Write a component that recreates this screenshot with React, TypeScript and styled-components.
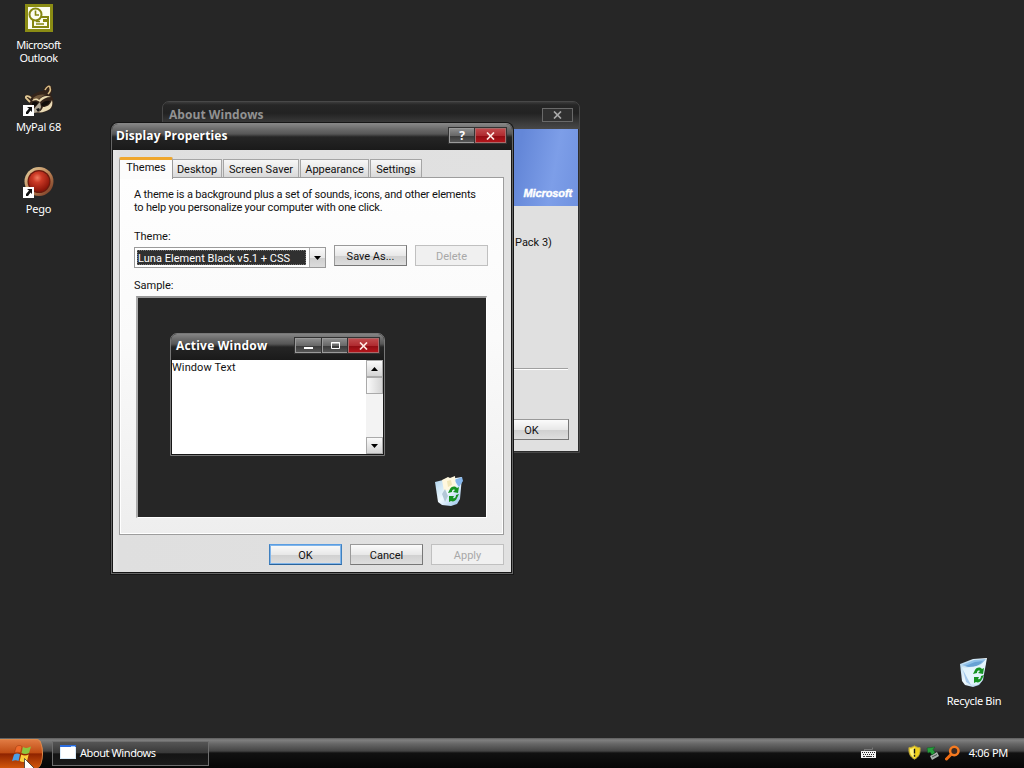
import React from 'react';
import styled, { createGlobalStyle, css } from 'styled-components';

const App = () => {
  return (
    <>
      <GlobalStyle />
      <Screen>
        <Desktop>
          <DesktopIcons>
            <DesktopItem>
              <OutlookIcon />
              <IconLabel>
                Microsoft
                <br />
                Outlook
              </IconLabel>
            </DesktopItem>
            <DesktopItem>
              <RaccoonIcon />
              <IconLabel $spacing="-0.2px">MyPal 68</IconLabel>
            </DesktopItem>
            <DesktopItem>
              <PegoIcon />
              <IconLabel $spacing="-0.2px">Pego</IconLabel>
            </DesktopItem>
          </DesktopIcons>

          <BinItem>
            <BinIcon width={30} height={32} />
            <IconLabel $spacing="-0.32px">Recycle Bin</IconLabel>
          </BinItem>

          <AboutWindow />
          <DisplayProperties />
        </Desktop>
        <Taskbar />
      </Screen>
    </>
  );
};

export default App;

const AboutWindow = () => (
  <AboutFrame>
    <AboutTitleBar>
      <AboutTitle>About Windows</AboutTitle>
      <InactiveClose>
        <CrossGlyph color="#a8a8a8" />
      </InactiveClose>
    </AboutTitleBar>
    <AboutBanner>
      <Brand>Microsoft</Brand>
    </AboutBanner>
    <AboutBody>
      <AboutText>Pack 3)</AboutText>
      <AboutRule />
      <AboutButton>OK</AboutButton>
    </AboutBody>
  </AboutFrame>
);

const tabs = [
  { name: 'Desktop', width: 50, spacing: '0' },
  { name: 'Screen Saver', width: 76, spacing: '0.05px' },
  { name: 'Appearance', width: 69, spacing: '0' },
  { name: 'Settings', width: 52, spacing: '-0.1px' },
];

const DisplayProperties = () => (
  <DialogFrame>
    <DialogTitleBar>
      <DialogTitle>Display Properties</DialogTitle>
      <CaptionButton $width={26}>?</CaptionButton>
      <CaptionButton $width={31} $red>
        <CrossGlyph color="#ffe9e4" />
      </CaptionButton>
    </DialogTitleBar>
    <DialogBody>
      <TabList>
        <ActiveTab>Themes</ActiveTab>
        {tabs.map(({ name, width, spacing }) => (
          <Tab key={name} $width={width} $spacing={spacing}>
            {name}
          </Tab>
        ))}
      </TabList>
      <TabPanel>
        <Description>
          <Line $spacing="-0.16px">
            A theme is a background plus a set of sounds, icons, and other elements
          </Line>
          <Line $spacing="-0.19px">to help you personalize your computer with one click.</Line>
        </Description>
        <FieldLabel>Theme:</FieldLabel>
        <ThemeRow>
          <ComboBox>
            <ComboValue>Luna Element Black v5.1 + CSS</ComboValue>
            <ComboArrow>
              <ArrowGlyph />
            </ComboArrow>
          </ComboBox>
          <Button>Save As...</Button>
          <Button $disabled>Delete</Button>
        </ThemeRow>
        <SampleLabel>Sample:</SampleLabel>
        <Sample>
          <SampleWindow />
          <SampleBin>
            <BinIcon width={30} height={32} papers />
          </SampleBin>
        </Sample>
      </TabPanel>
      <DialogActions>
        <Button $primary>OK</Button>
        <Button>Cancel</Button>
        <Button $disabled>Apply</Button>
      </DialogActions>
    </DialogBody>
  </DialogFrame>
);

const SampleWindow = () => (
  <SampleFrame>
    <SampleTitleBar>
      <SampleTitle>Active Window</SampleTitle>
      <CaptionButton $width={27}>
        <svg width="11" height="9" viewBox="0 0 11 9">
          <rect x="1" y="6" width="9" height="2" fill="#fff" />
        </svg>
      </CaptionButton>
      <CaptionButton $width={26}>
        <svg width="11" height="9" viewBox="0 0 11 9">
          <path d="M1.5 1.5h8v6h-8zM1 2h9" stroke="#fff" fill="none" />
        </svg>
      </CaptionButton>
      <CaptionButton $width={31} $red>
        <CrossGlyph color="#ffe9e4" />
      </CaptionButton>
    </SampleTitleBar>
    <SampleBody>
      <SampleText>Window Text</SampleText>
      <ScrollBar>
        <ScrollButton>
          <ArrowGlyph up />
        </ScrollButton>
        <ScrollThumb />
        <ScrollTrack />
        <ScrollButton>
          <ArrowGlyph />
        </ScrollButton>
      </ScrollBar>
    </SampleBody>
  </SampleFrame>
);

const Taskbar = () => (
  <Bar>
    <StartButton>
      <WindowsFlag />
    </StartButton>
    <TaskButton>
      <svg width="16" height="14" viewBox="0 0 16 14">
        <rect x="0" y="0" width="16" height="14" fill="#d9ecfb" />
        <rect x="0" y="0" width="16" height="2" fill="#2a6ce0" />
        <rect x="11" y="1" width="4" height="1" fill="#9ccaff" />
        <rect x="1" y="2" width="14" height="11" fill="#fff" />
      </svg>
      <TaskLabel>About Windows</TaskLabel>
    </TaskButton>
    <KeyboardIcon />
    <Tray>
      <ShieldIcon />
      <SafelyRemoveIcon />
      <SearchIcon />
      <Clock>4:06 PM</Clock>
    </Tray>
    <Cursor width="11" height="17" viewBox="0 0 11 17">
      <path
        d="M.5 .5V14l3-3 3 6 3-1-3-5.500h4z"
        fill="#fff"
        stroke="#222"
        strokeWidth=".7"
      />
    </Cursor>
  </Bar>
);

const CrossGlyph = ({ color }: { color: string }) => (
  <svg width="9" height="8" viewBox="0 0 9 8">
    <path d="M1 .5l7 7M8 .5l-7 7" stroke={color} strokeWidth="1.7" />
  </svg>
);

const ArrowGlyph = ({ up }: { up?: boolean }) => (
  <svg width="7" height="4" viewBox="0 0 7 4">
    <path d={up ? 'M0 4h7L3.500 0z' : 'M0 0h7L3.500 4z'} fill="#000" />
  </svg>
);

const Shortcut = () => (
  <g>
    <rect x="0" y="21" width="11" height="11" fill="#fff" />
    <path d="M4 23h5v5L7.500 26.500 5 30H3V28l3-3.500z" fill="#111" />
  </g>
);

const OutlookIcon = () => (
  <svg width="32" height="32" viewBox="0 0 32 32">
    <rect x="2" y="2" width="28" height="28" fill="#8b8c14" />
    <rect x="5" y="5" width="22" height="22" fill="#fdfdf0" />
    <rect x="10" y="15" width="15" height="10" fill="#fdfdf0" stroke="#85860f" strokeWidth="2" />
    <rect x="20" y="17" width="4" height="3" fill="#85860f" />
    <path d="M13 19.500h4M13 22h8" stroke="#85860f" strokeWidth="1.300" />
    <circle cx="12.500" cy="12.500" r="6" fill="#fdfdf0" stroke="#85860f" strokeWidth="2" />
    <path d="M12.500 8.500v4.500h3.500" stroke="#85860f" strokeWidth="1.600" fill="none" />
  </svg>
);

const RaccoonIcon = () => (
  <svg width="32" height="32" viewBox="0 0 32 32">
    <path d="M2 14c-1-4 3-4 6-2 4-3 8-5 12-5 2-6 6-7 8-5 2 2 1 6 0 9 3 4 3 9 1 13-4 4-10 5-16 5-5-3-7-7-6-11-2-1-4-2-5-4z" fill="#34241a" />
    <path d="M22 6c2-4 5-5 5-2 1 2-1 5-2 6" stroke="#d9bd87" strokeWidth="1.600" fill="none" />
    <path d="M7 18l-4-4c-1-2 2-3 5 0" stroke="#dfc794" strokeWidth="1.800" fill="none" />
    <path d="M10 14c4-4 10-4 14-3-4 0-6 2-9 5-2-1-3-1-5 1z" fill="#6e563a" />
    <path d="M9 17c2-3 5-3 7-1 3-4 8-5 12-3-5 0-8 2-11 5-3-2-5-2-8-1z" fill="#ead9ae" />
    <path d="M29 16c1 4 0 7-2 9-5 3-9 4-13 3 3 0 5-2 6-5 4 0 7-2 9-7z" fill="#e9dab5" />
    <path d="M9 19c2-2 4-2 6 0-1 3-4 4-6 2zM18 20c3-3 6-4 9-3-1 4-5 5-8 5z" fill="#100c09" />
    <path d="M15 20l2-2 1 5-2 5-5 1-1-3z" fill="#b0a795" />
    <path d="M13 25l3-1 1 2-2 2z" fill="#111" />
    <Shortcut />
  </svg>
);

const PegoIcon = () => (
  <svg width="32" height="32" viewBox="0 0 32 32">
    <defs>
      <radialGradient id="pego" cx=".42" cy=".32" r=".65">
        <stop offset="0" stopColor="#f07c60" />
        <stop offset=".35" stopColor="#cc3a26" />
        <stop offset="1" stopColor="#8c1509" />
      </radialGradient>
      <linearGradient id="ring" x1="0" y1="0" x2="1" y2="1">
        <stop offset="0" stopColor="#e6d5a4" />
        <stop offset=".55" stopColor="#b87f52" />
        <stop offset="1" stopColor="#6a2b1a" />
      </linearGradient>
    </defs>
    <circle cx="16" cy="15.500" r="14.500" fill="url(#ring)" />
    <circle cx="16" cy="15.500" r="11.500" fill="#6b1a0e" />
    <circle cx="16" cy="15.500" r="10.300" fill="url(#pego)" />
    <Shortcut />
  </svg>
);

type BinProps = { width: number; height: number; papers?: boolean };

const BinIcon = ({ width, height, papers }: BinProps) => (
  <svg width={width} height={height} viewBox="0 0 30 32">
    <defs>
      <linearGradient id="glass" x1="0" y1="0" x2="1" y2="1">
        <stop offset="0" stopColor="#a9d0ea" />
        <stop offset=".5" stopColor="#f1faff" />
        <stop offset="1" stopColor="#8dbbe6" />
      </linearGradient>
    </defs>
    {papers ? (
      <>
        <path d="M1 7l8-2 19-3-2 22-3 5-6 2-9-1-4-3z" fill="url(#glass)" />
        <path d="M20 5l8-3 1 4-4 6z" fill="#86b7ec" />
        <path d="M8 5l6-3 2 1 5-2 1 12-12 3z" fill="#fff8df" />
        <path d="M13 6l4-1 1 5-4 2z" fill="#f1e6b8" />
        <path d="M8 19l3-5 3 7-3 6z" fill="#b3c8d8" />
      </>
    ) : (
      <>
        <path d="M1 8L14 3l14-1-4 22-4 5-6 2-8-2-3-4z" fill="url(#glass)" />
        <path d="M3 9l12-5 12-1-6 7-12 1z" fill="#8fc0e8" />
        <path d="M6 10l10-4 8-1-5 5-9 1z" fill="#4d8cc6" opacity=".6" />
        <path d="M3 11c6 2 13 1 24-6l-4 20-5 4-9-1z" fill="#e3f4fd" opacity=".85" />
        <path d="M4 14l3 12 5 3z" fill="#79acdf" opacity=".6" />
      </>
    )}
    <path d="M14 18l2-4c2-3 5-3 7-1l2-1-1 6-5-1 2-2c-2-1-3 0-3 2z" fill="#169322" />
    <path d="M25 19l-2 4c-1 3-4 4-6 3l-2 1v-6h5l-1 2c2 1 3-1 3-3z" fill="#169322" />
  </svg>
);

const WindowsFlag = () => (
  <svg width="22" height="20" viewBox="0 0 22 20">
    <path d="M5 3c2-2 4-2 6-.5L9.500 9C7.500 8 5.500 8 3.500 9z" fill="#ef6a2b" stroke="#8c2a05" strokeWidth=".4" />
    <path d="M12 3c3 1.500 5 1 8-.5L18 9c-2.500 1.300-5 1.300-7.500 0z" fill="#8cc63e" />
    <path d="M3 10.500c2-1.300 4-1.300 6-.3L7.500 17c-2-1-4-1-6.500.3z" fill="#4a9fe8" />
    <path d="M10.200 10.500c2.500 1.300 5 1.300 7.500 0L16 17c-2.500 1.500-5 1.300-7.300 0z" fill="#fbd13c" />
  </svg>
);

const KeyboardIcon = () => (
  <Keyboard width="15" height="12" viewBox="0 0 15 12">
    <path d="M3 3.500h8.500V1.500M3.500 3v2" stroke="#777" fill="none" />
    <rect x="0" y="5" width="15" height="7" fill="#f4f4f4" />
    <path d="M1 6.500h13M2 8.500h12" stroke="#222" strokeDasharray="1 1" />
    <path d="M2 10.500h2M5 10.500h6M12 10.500h1" stroke="#333" />
  </Keyboard>
);

const ShieldIcon = () => (
  <svg width="13" height="15" viewBox="0 0 14 16">
    <path d="M7 .7c2 1.500 4 2 6 2 .5 6-1 10-6 12.500C2 12.700.5 8.700 1 2.700c2 0 4-.5 6-2z" fill="#f0d01a" stroke="#b9a544" />
    <path d="M7 2v12C3 11.500 2 8 2 4c2 0 3-.5 5-2z" fill="#fff27a" />
    <path d="M7 4v5M7 10.500v2" stroke="#111" strokeWidth="1.500" />
  </svg>
);

const SafelyRemoveIcon = () => (
  <svg width="14" height="14" viewBox="0 0 14 14">
    <path d="M4 10l7-4 2 4-7 4z" fill="#a9b2ac" />
    <path d="M6 11l5-2.500" stroke="#444f48" />
    <path d="M1 2l8-1-2 2.500 2 3-3 2.500-2-3-2 1z" fill="#27a13c" stroke="#0f5d20" strokeWidth=".5" />
  </svg>
);

const SearchIcon = () => (
  <svg width="16" height="16" viewBox="0 0 16 16">
    <path d="M6 9.500L1.500 14" stroke="#ef6c13" strokeWidth="3" strokeLinecap="round" />
    <circle cx="9.300" cy="6" r="4.200" fill="#3b2a22" stroke="#f47a20" strokeWidth="2.500" />
  </svg>
);

const GlobalStyle = createGlobalStyle`
  * {
    box-sizing: border-box;
  }

  body {
    margin: 0;
    overflow: hidden;
    background: #262626;
  }

  svg {
    display: block;
    flex-shrink: 0;
  }
`;

const uiFont = css`
  font-family: 'Roboto', 'Liberation Sans', sans-serif;
  font-size: 11px;
  font-weight: 400;
  line-height: 13px;
  white-space: nowrap;
`;

const tahoma = css`
  font-family: 'Noto Sans', 'DejaVu Sans', sans-serif;
  font-size: 11px;
  line-height: 13px;
  white-space: nowrap;
`;

const titleFont = css`
  font-family: 'Open Sans', 'Noto Sans', sans-serif;
  font-size: 12px;
  font-weight: 700;
  line-height: 16px;
  white-space: nowrap;
`;

const Screen = styled.div`
  width: 1024px;
  height: 768px;
  display: flex;
  flex-direction: column;
  overflow: hidden;
  background: #262626;
`;

const Desktop = styled.div`
  position: relative;
  height: 738px;
`;

const DesktopIcons = styled.div`
  width: 77px;
  padding-top: 2px;
  display: flex;
  flex-direction: column;
`;

const DesktopItem = styled.div`
  height: 82px;
  display: flex;
  flex-direction: column;
  align-items: center;
  gap: 4px;
`;

const BinItem = styled(DesktopItem)`
  position: absolute;
  left: 934px;
  top: 656px;
  width: 80px;
  gap: 6px;
`;

const IconLabel = styled.div<{ $spacing?: string }>`
  ${tahoma}
  color: #fff;
  text-align: center;
  letter-spacing: ${({ $spacing }) => $spacing ?? '-0.45px'};
`;

const AboutFrame = styled.div`
  position: absolute;
  left: 162px;
  top: 101px;
  width: 418px;
  height: 352px;
  padding: 0 1px 1px;
  display: flex;
  flex-direction: column;
  border: 1px solid #484848;
  border-radius: 7px 7px 0 0;
  background: #2c2c2c;
  overflow: hidden;
`;

const AboutTitleBar = styled.div`
  height: 27px;
  margin: 0 -1px;
  padding: 0 6px 2px 6px;
  display: flex;
  align-items: center;
  justify-content: space-between;
  background: linear-gradient(#3b3b3b 0, #262626 3px, #222 11px, #3d3d3d 22px, #484848 100%);
`;

const AboutTitle = styled.div`
  ${titleFont}
  color: #929292;
  letter-spacing: 0.05px;
`;

const InactiveClose = styled.div`
  width: 31px;
  height: 14px;
  display: flex;
  align-items: center;
  justify-content: center;
  border: 1px solid #696969;
  background: #303030;
`;

const AboutBanner = styled.div`
  height: 77px;
  padding: 0 6px 5px;
  display: flex;
  align-items: flex-end;
  justify-content: flex-end;
  background: linear-gradient(100deg, #6487d8 84%, #7d9ee8 93%, #7092e0 100%);
`;

const Brand = styled.div`
  font: italic 700 11px/16px 'Liberation Sans', sans-serif;
  color: #fff;
  letter-spacing: -0.12px;
  -webkit-text-stroke: 0.4px #fff;
`;

const AboutBody = styled.div`
  flex: 1;
  padding: 30px 9px 11px;
  display: flex;
  flex-direction: column;
  background: #e0e0e0;
`;

const AboutText = styled.div`
  ${uiFont}
  padding-left: 342px;
  color: #111;
`;

const AboutRule = styled.div`
  margin: 119px 1px 0 0;
  border-top: 1px solid #a0a0a0;
  border-bottom: 1px solid #fff;
`;

const DialogFrame = styled.div`
  position: absolute;
  left: 111px;
  top: 123px;
  width: 402px;
  height: 451px;
  padding: 0 1px 1px;
  display: flex;
  flex-direction: column;
  border: 1px solid #666;
  border-top-color: #858585;
  border-radius: 7px 7px 0 0;
  background: #161616;
  box-shadow: 0 0 0 1px #161616;
  overflow: hidden;
`;

const DialogTitleBar = styled.div`
  height: 26px;
  margin: 0 -1px;
  padding: 4px 6px 0 4px;
  display: flex;
  align-items: flex-start;
  background: linear-gradient(#858585 0, #6b6b6b 5px, #565656 10px, #252525 13px, #1a1a1a 100%);
`;

const DialogTitle = styled.div`
  ${titleFont}
  flex: 1;
  color: #fff;
  letter-spacing: 0.12px;
  text-shadow: 1px 1px 1px #222;
`;

const CaptionButton = styled.div<{ $width: number; $red?: boolean }>`
  width: ${({ $width }) => $width}px;
  height: 15px;
  display: flex;
  align-items: center;
  justify-content: center;
  border: 1px solid ${({ $red }) => ($red ? '#a96a6a' : '#9b9b9b')};
  outline: 1px solid #333;
  background: ${({ $red }) =>
    $red
      ? 'linear-gradient(#c04a4c 0, #b02b30 50%, #8e0c12 52%, #b3151b 100%)'
      : 'linear-gradient(#8c8c8c 0, #686868 50%, #393939 52%, #565656 100%)'};
  color: #fff;
  font: 700 12px/13px 'Open Sans', sans-serif;
`;

const DialogBody = styled.div`
  flex: 1;
  padding: 7px 7px 6px 6px;
  display: flex;
  flex-direction: column;
  background: linear-gradient(90deg, #e6e6e6, #dfdfdf 6px, #e1e1e1);
`;

const TabList = styled.div`
  height: 20px;
  display: flex;
  align-items: flex-end;
  gap: 1px;
`;

const ActiveTab = styled.div`
  ${uiFont}
  position: relative;
  z-index: 1;
  width: 54px;
  height: 22px;
  margin: 0 -2px -2px 0;
  padding-top: 1px;
  align-self: flex-start;
  border: 1px solid #9b9b9b;
  border-top: 3px solid #efa62c;
  border-bottom: 0;
  border-radius: 2px 2px 0 0;
  background: #fcfcfc;
  color: #111;
  text-align: center;
`;

const Tab = styled.div<{ $width: number; $spacing: string }>`
  ${uiFont}
  width: ${({ $width }) => $width}px;
  height: 18px;
  padding-top: 3px;
  border: 1px solid #a5a5a5;
  border-bottom: 0;
  background: linear-gradient(#f7f7f7, #e9e9e9 50%, #d9d9d9);
  color: #111;
  text-align: center;
  letter-spacing: ${({ $spacing }) => $spacing};
`;

const TabPanel = styled.div`
  height: 358px;
  padding: 10px 14px 0;
  display: flex;
  flex-direction: column;
  border: 1px solid #9d9d9d;
  box-shadow: inset 0 0 0 1px #fff;
  background: linear-gradient(#fefefe, #fafafa 45%, #eee 100%);
`;

const Description = styled.div`
  display: flex;
  flex-direction: column;
`;

const Line = styled.div<{ $spacing: string }>`
  ${uiFont}
  color: #111;
  letter-spacing: ${({ $spacing }) => $spacing};
`;

const FieldLabel = styled.div`
  ${uiFont}
  margin-top: 16px;
  color: #111;
`;

const ThemeRow = styled.div`
  margin-top: 2px;
  display: flex;
  align-items: flex-start;
  gap: 8px;
`;

const ComboBox = styled.div`
  width: 192px;
  height: 21px;
  margin-top: 2px;
  padding: 2px 0 2px 2px;
  display: flex;
  border: 1px solid #9a9a9a;
  background: #fff;
`;

const ComboValue = styled.div`
  ${uiFont}
  width: 169px;
  padding: 2px 0 0 1px;
  outline: 1px dotted #777;
  outline-offset: -1px;
  background: #303030;
  color: #fff;
  letter-spacing: 0.03px;
`;

const ComboArrow = styled.div`
  flex: 1;
  margin: -2px 0 -2px 3px;
  display: flex;
  align-items: center;
  justify-content: center;
  border-left: 1px solid #aaa;
  background: linear-gradient(#fafafa, #e8e8e8 50%, #cfcfcf 52%, #dcdcdc);
`;

const Button = styled.div<{ $primary?: boolean; $disabled?: boolean }>`
  ${uiFont}
  width: 73px;
  height: 21px;
  padding-top: 1px;
  display: flex;
  align-items: center;
  justify-content: center;
  border: 1px solid #999;
  border-right-color: #777;
  border-bottom-color: #777;
  background: linear-gradient(#fbfbfb 0, #e8e8e8 50%, #d0d0d0 52%, #dedede 100%);
  color: #111;

  ${({ $primary }) =>
    $primary &&
    css`
      border-color: #5a9de2 #3f80bf #2b639a;
      box-shadow: inset 0 0 0 1px #80b5ea;
    `}

  ${({ $disabled }) =>
    $disabled &&
    css`
      border-color: #c0c0c0;
      background: #f0f0f0;
      color: #a8a8a8;
    `}
`;

const DialogActions = styled.div`
  margin-top: 9px;
  display: flex;
  justify-content: flex-end;
  gap: 8px;
`;

const AboutButton = styled(Button)`
  margin-top: auto;
  padding-right: 2px;
  align-self: flex-end;
`;

const SampleLabel = styled.div`
  ${uiFont}
  margin-top: 11px;
  color: #111;
`;

const Sample = styled.div`
  position: relative;
  width: 351px;
  height: 222px;
  margin: 4px 0 0 2px;
  border: 1px solid #fff;
  border-top: 2px solid #999;
  border-left: 2px solid #aaa;
  background: #262626;
`;

const SampleBin = styled.div`
  position: absolute;
  left: 296px;
  top: 177px;
`;

const SampleFrame = styled.div`
  position: absolute;
  left: 32px;
  top: 35px;
  width: 215px;
  height: 123px;
  padding: 0 1px 1px;
  display: flex;
  flex-direction: column;
  border: 1px solid #777;
  border-radius: 7px 7px 0 0;
  background: #161616;
  overflow: hidden;
`;

const SampleTitleBar = styled(DialogTitleBar)`
  padding: 4px 5px 0 5px;
`;

const SampleTitle = styled(DialogTitle)`
  letter-spacing: 0.2px;
`;

const SampleBody = styled.div`
  flex: 1;
  display: flex;
  background: #fff;
`;

const SampleText = styled.div`
  ${uiFont}
  flex: 1;
  padding-top: 1px;
  color: #111;
  letter-spacing: 0.1px;
`;

const ScrollBar = styled.div`
  width: 17px;
  display: flex;
  flex-direction: column;
  background: #f3f3f3;
`;

const ScrollButton = styled.div`
  height: 17px;
  display: flex;
  align-items: center;
  justify-content: center;
  border: 1px solid #aaa;
  background: linear-gradient(#fafafa, #d4d4d4);
`;

const ScrollThumb = styled(ScrollButton)`
  background: linear-gradient(90deg, #fafafa, #d4d4d4);
`;

const ScrollTrack = styled.div`
  flex: 1;
`;

const Bar = styled.div`
  position: relative;
  height: 30px;
  padding-right: 16px;
  display: flex;
  align-items: center;
  background: linear-gradient(#5b5b5b 0, #808080 2px, #666 6px, #444 13px, #111 15px, #060606 100%);
`;

const StartButton = styled.div`
  width: 43px;
  height: 29px;
  margin-top: 1px;
  padding: 4px 0 0 11px;
  border: 1px solid #e08a4a;
  border-left: 0;
  border-bottom: 0;
  border-radius: 0 6px 6px 0 / 0 14px 14px 0;
  background: linear-gradient(#e07a42 0, #c04c14 45%, #8f2400 50%, #d2560c 100%);
`;

const TaskButton = styled.div`
  width: 157px;
  height: 25px;
  margin-left: 9px;
  padding: 0 0 2px 7px;
  display: flex;
  align-items: center;
  gap: 4px;
  border: 1px solid #6e6e6e;
  background: linear-gradient(#555 0, #393939 46%, #141414 52%, #1b1b1b 100%);
`;

const TaskLabel = styled.div`
  ${tahoma}
  color: #fff;
  letter-spacing: -0.42px;
`;

const Keyboard = styled.svg`
  margin: 0 32px 2px auto;
`;

const Tray = styled.div`
  padding-bottom: 1px;
  display: flex;
  align-items: center;
  gap: 5px;
`;

const Clock = styled.div`
  ${tahoma}
  margin-left: 3px;
  color: #fff;
  letter-spacing: -0.28px;
`;

const Cursor = styled.svg`
  position: absolute;
  left: 24px;
  top: 20px;
`;
